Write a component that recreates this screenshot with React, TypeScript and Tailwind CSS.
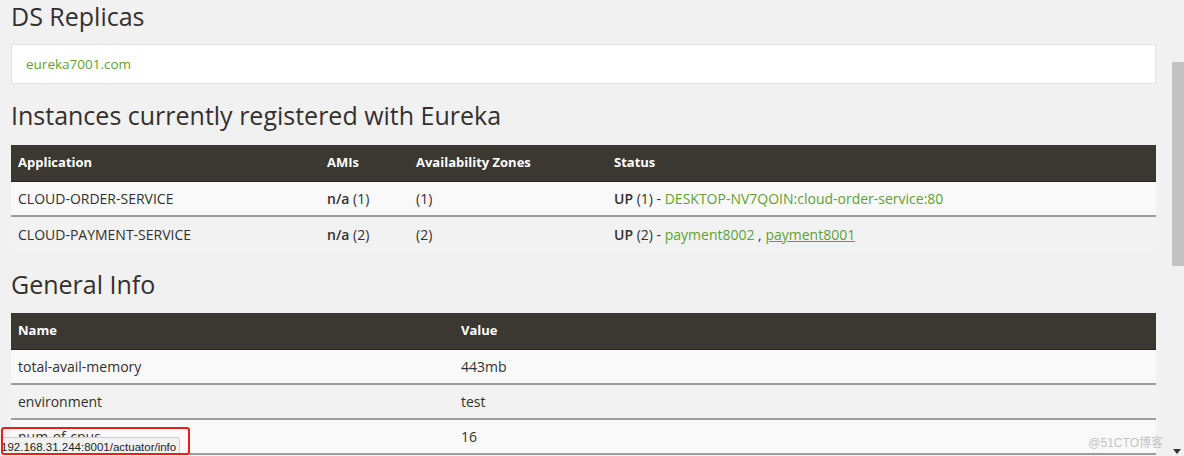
import type { ReactNode } from 'react'

const font = { fontFamily: '"Open Sans", "Noto Sans", sans-serif' }

function Heading({ children, className }: { children: ReactNode; className: string }) {
  return (
    <h2 className={`text-[25px] leading-[30px] text-[#34302d] font-normal ${className}`}>{children}</h2>
  )
}

function HeadRow({ cells, widths }: { cells: string[]; widths: string[] }) {
  return (
    <tr className="bg-[#3b3731] text-white h-[36px] border-b border-[#25221f]">
      {cells.map((c, i) => (
        <th key={c} className={`text-left font-bold text-[13px] pl-[7px] ${widths[i]}`}>
          {c}
        </th>
      ))}
    </tr>
  )
}

function Row({ odd, children }: { odd: boolean; children: ReactNode }) {
  return (
    <tr
      className={`h-[35px] text-[14px] text-[#34302d] border-b-2 border-[#9d9d9d] ${
        odd ? 'bg-[#f9f9f9]' : 'bg-[#f2f2f2]'
      }`}
    >
      {children}
    </tr>
  )
}

const Link = ({ children, underline }: { children: ReactNode; underline?: boolean }) => (
  <span className={`text-[#5fa134] ${underline ? 'underline decoration-[#5fa134]' : ''}`}>{children}</span>
)

export default function App() {
  const info = [
    ['total-avail-memory', '443mb'],
    ['environment', 'test'],
    ['num-of-cpus', '16'],
  ]

  return (
    <div className="relative w-[1184px] h-[456px] overflow-hidden bg-[#f1f1f1] flex" style={font}>
      {/* page */}
      <div className="w-[1172px] pl-[11px] pr-[16px]">
        <Heading className="mt-[1px]">DS Replicas</Heading>
        <div className="mt-[13px] h-[40px] bg-white border border-[#e2e2e2] flex items-center pl-[14px] text-[13.5px]">
          <Link>eureka7001.com</Link>
        </div>

        <Heading className="mt-[16px]">Instances currently registered with Eureka</Heading>
        <table className="mt-[15px] w-full border-collapse">
          <thead>
            <HeadRow
              cells={['Application', 'AMIs', 'Availability Zones', 'Status']}
              widths={['w-[309px]', 'w-[89px]', 'w-[198px]', '']}
            />
          </thead>
          <tbody>
            <Row odd>
              <td className="pl-[7px]">CLOUD-ORDER-SERVICE</td>
              <td className="pl-[7px]">
                <b className="font-semibold">n/a</b> (1)
              </td>
              <td className="pl-[7px]">(1)</td>
              <td className="pl-[7px]">
                <b className="font-semibold">UP</b> (1) - <Link>DESKTOP-NV7QOIN:cloud-order-service:80</Link>
              </td>
            </Row>
            <tr className="h-[35px] text-[14px] text-[#34302d] bg-[#f2f2f2]">
              <td className="pl-[7px]">CLOUD-PAYMENT-SERVICE</td>
              <td className="pl-[7px]">
                <b className="font-semibold">n/a</b> (2)
              </td>
              <td className="pl-[7px]">(2)</td>
              <td className="pl-[7px]">
                <b className="font-semibold">UP</b> (2) - <Link>payment8002</Link> ,{' '}
                <Link underline>payment8001</Link>
              </td>
            </tr>
          </tbody>
        </table>

        <Heading className="mt-[18px]">General Info</Heading>
        <table className="mt-[14px] w-full border-collapse">
          <thead>
            <HeadRow cells={['Name', 'Value']} widths={['w-[443px]', '']} />
          </thead>
          <tbody>
            {info.map(([k, v], i) => (
              <Row key={k} odd={i % 2 === 0}>
                <td className="pl-[7px]">{k}</td>
                <td className="pl-[7px]">{v}</td>
              </Row>
            ))}
          </tbody>
        </table>
      </div>

      {/* scrollbar */}
      <div className="w-[12px] bg-[#f1f1f1] pt-[62px]">
        <div className="h-[204px] bg-[#c1c1c1]" />
      </div>

      {/* status bar url */}
      <div
        className="absolute left-0 bottom-0 h-[19px] w-[180px] bg-[#f2f2f2] border-t border-r border-[#d0d0d0] rounded-tr-[3px] px-[1px] text-[11.5px] leading-[18px] text-[#222]"
        style={{ fontFamily: '"Liberation Sans", sans-serif' }}
      >
        192.168.31.244:8001/actuator/info
      </div>
      <div className="absolute left-[1px] top-[427px] w-[189px] h-[28px] border-2 border-[#e8201a] rounded-[3px]" />

      {/* watermark */}
      <div
        className="absolute right-[21px] bottom-[6px] text-[12px] leading-[14px] text-[#c4c4c4]"
        style={{ fontFamily: '"Liberation Sans", "Noto Sans CJK SC", sans-serif' }}
      >
        @51CTO博客
      </div>
      <div className="absolute right-[3px] bottom-[2px] w-0 h-0 border-l-[4px] border-r-[4px] border-t-[5px] border-l-transparent border-r-transparent border-t-[#333]" />
    </div>
  )
}
